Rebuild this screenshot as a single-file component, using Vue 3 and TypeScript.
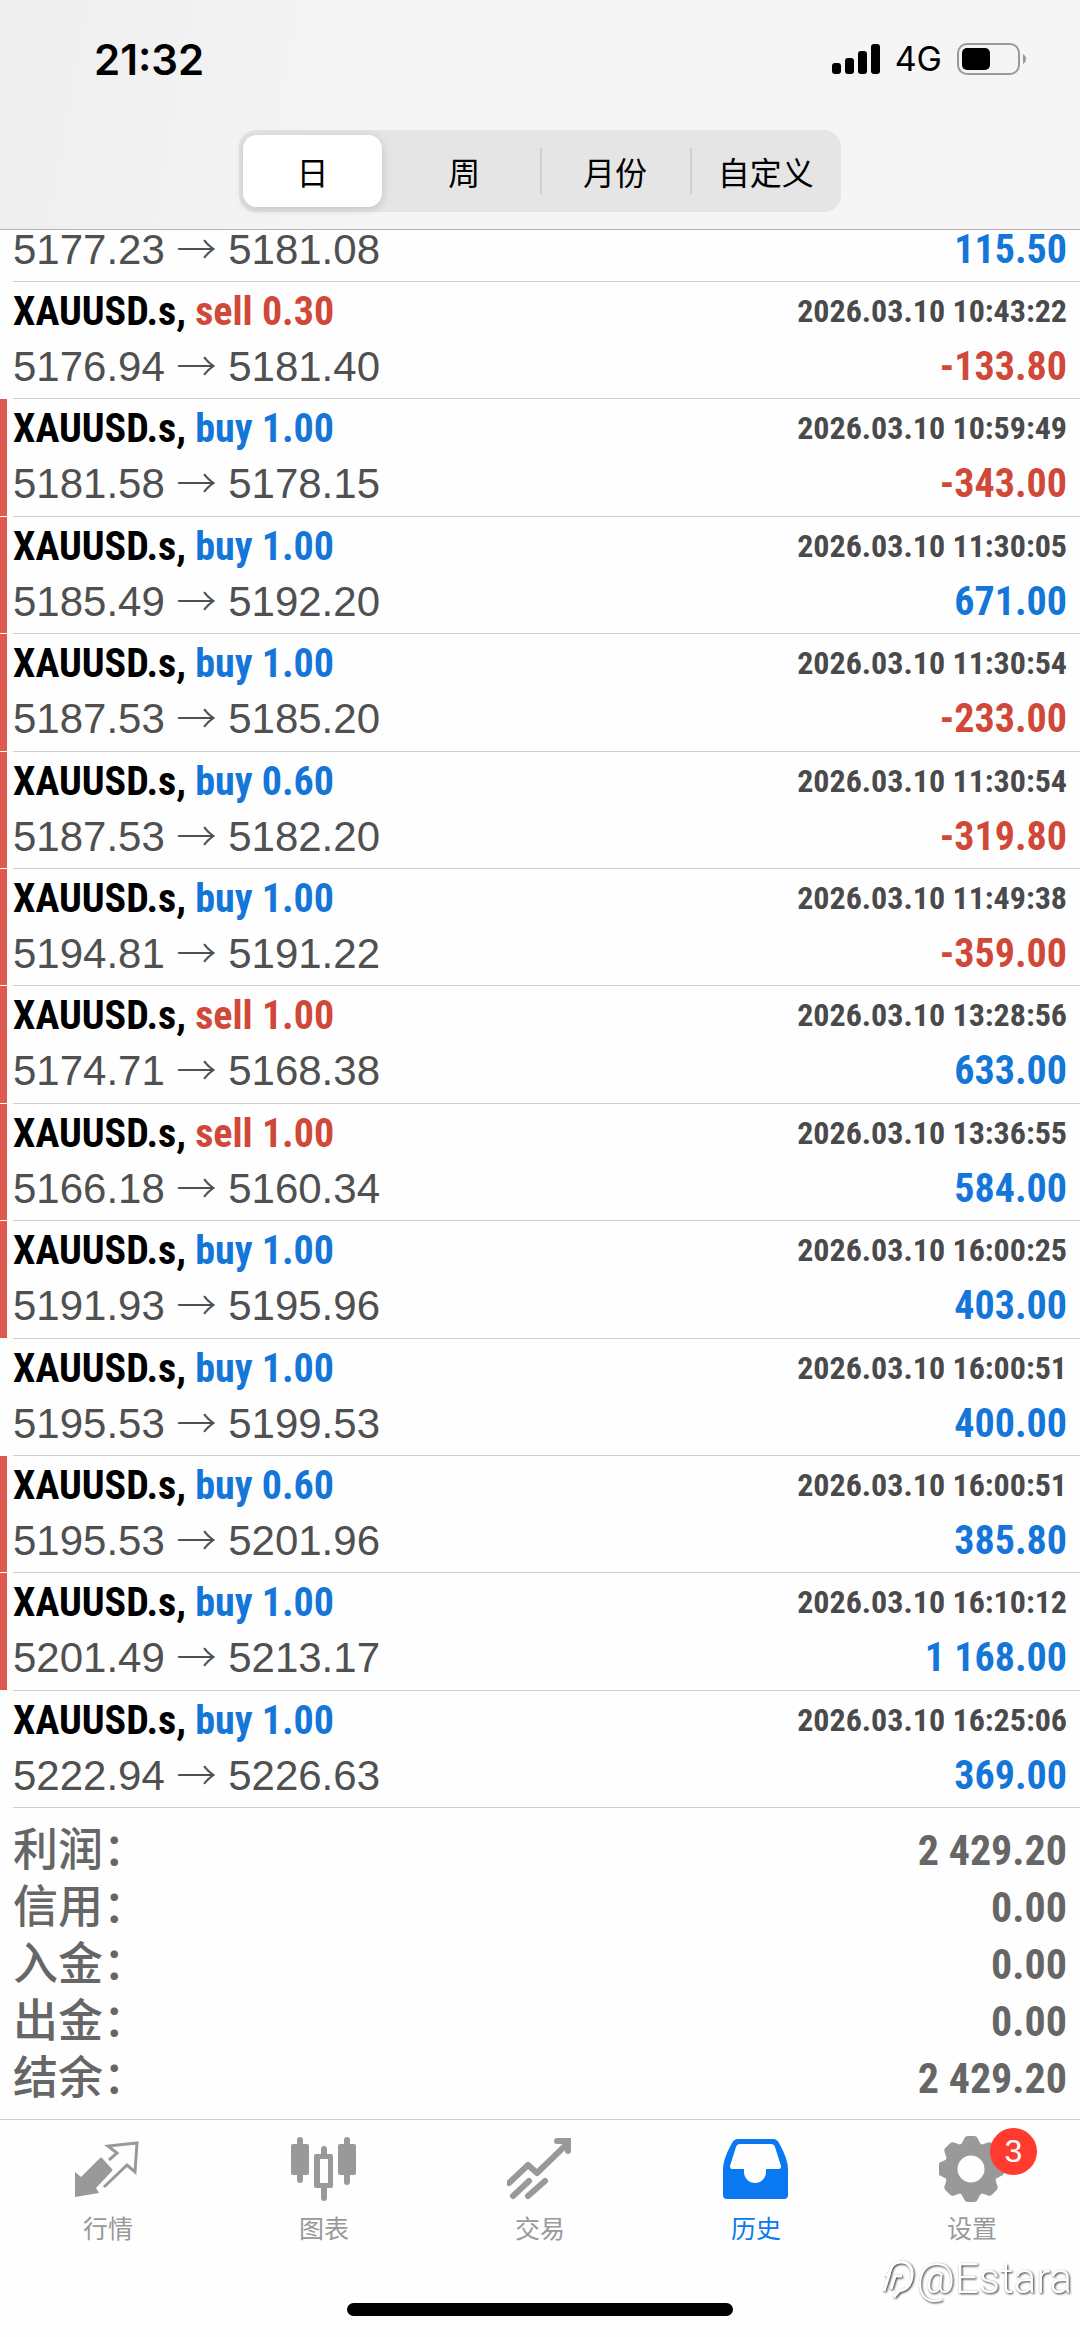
<script setup lang="ts">
import { ref } from 'vue'

type Side = 'buy' | 'sell'

interface Deal {
  side: Side
  volume: string
  open: string
  close: string
  time: string
  profit: string
  marked: boolean
}

const symbol = 'XAUUSD.s'
const periods = ['日', '周', '月份', '自定义']
const period = ref('日')
const tab = ref('history')

const clippedDeal = { open: '5177.23', close: '5181.08', profit: '115.50' }

const deal = (
  side: Side,
  volume: string,
  open: string,
  close: string,
  time: string,
  profit: string,
  marked = true,
): Deal => ({ side, volume, open, close, time: `2026.03.10 ${time}`, profit, marked })

const deals: Deal[] = [
  deal('sell', '0.30', '5176.94', '5181.40', '10:43:22', '-133.80', false),
  deal('buy', '1.00', '5181.58', '5178.15', '10:59:49', '-343.00'),
  deal('buy', '1.00', '5185.49', '5192.20', '11:30:05', '671.00'),
  deal('buy', '1.00', '5187.53', '5185.20', '11:30:54', '-233.00'),
  deal('buy', '0.60', '5187.53', '5182.20', '11:30:54', '-319.80'),
  deal('buy', '1.00', '5194.81', '5191.22', '11:49:38', '-359.00'),
  deal('sell', '1.00', '5174.71', '5168.38', '13:28:56', '633.00'),
  deal('sell', '1.00', '5166.18', '5160.34', '13:36:55', '584.00'),
  deal('buy', '1.00', '5191.93', '5195.96', '16:00:25', '403.00'),
  deal('buy', '1.00', '5195.53', '5199.53', '16:00:51', '400.00', false),
  deal('buy', '0.60', '5195.53', '5201.96', '16:00:51', '385.80'),
  deal('buy', '1.00', '5201.49', '5213.17', '16:10:12', '1 168.00'),
  deal('buy', '1.00', '5222.94', '5226.63', '16:25:06', '369.00', false),
]

const totals = [
  { label: '利润：', value: '2 429.20' },
  { label: '信用：', value: '0.00' },
  { label: '入金：', value: '0.00' },
  { label: '出金：', value: '0.00' },
  { label: '结余：', value: '2 429.20' },
]

const tabs = [
  { id: 'quotes', label: '行情' },
  { id: 'charts', label: '图表' },
  { id: 'trade', label: '交易' },
  { id: 'history', label: '历史' },
  { id: 'settings', label: '设置', badge: 3 },
]

const gearAngles = [0, 45, 90, 135, 180, 225, 270, 315]

const tone = (profit: string) => (profit.startsWith('-') ? 'loss' : 'gain')
</script>

<template>
  <div class="screen">
    <header class="top">
      <div class="status">
        <span class="clock">21:32</span>
        <div class="status-right">
          <svg class="signal" width="48" height="32" viewBox="0 0 48 32" aria-hidden="true">
            <rect x="0" y="20" width="9" height="11" rx="3" />
            <rect x="13" y="15" width="9" height="16" rx="3" />
            <rect x="26" y="8" width="9" height="23" rx="3" />
            <rect x="39" y="1" width="9" height="30" rx="3" />
          </svg>
          <span class="network">4G</span>
          <svg width="70" height="32" viewBox="0 0 70 32" aria-hidden="true">
            <rect x="1" y="1" width="61" height="30" rx="9" fill="none" stroke="#999" stroke-width="2" />
            <rect x="5" y="5" width="28" height="22" rx="5" fill="#000" />
            <path d="M66 11c4 2 4 8 0 10z" fill="#999" />
          </svg>
        </div>
      </div>
      <div class="segments" role="group" aria-label="周期">
        <button
          v-for="p in periods"
          :key="p"
          type="button"
          class="segment"
          :class="{ active: p === period }"
          :aria-pressed="p === period"
          @click="period = p"
        >
          {{ p }}
        </button>
      </div>
    </header>

    <main class="history">
      <ul class="deals">
        <li class="deal clipped">
          <div class="deal-body">
            <div class="line">
              <span class="prices">{{ clippedDeal.open }} <span class="arrow">→</span> {{ clippedDeal.close }}</span>
              <span class="profit gain">{{ clippedDeal.profit }}</span>
            </div>
          </div>
        </li>
        <li v-for="(d, i) in deals" :key="i" class="deal" :class="{ marked: d.marked }">
          <div class="deal-body">
            <div class="line">
              <span class="title">{{ symbol }}, <span :class="d.side">{{ d.side }} {{ d.volume }}</span></span>
              <time class="time">{{ d.time }}</time>
            </div>
            <div class="line">
              <span class="prices">{{ d.open }} <span class="arrow">→</span> {{ d.close }}</span>
              <span class="profit" :class="tone(d.profit)">{{ d.profit }}</span>
            </div>
          </div>
        </li>
      </ul>

      <dl class="totals">
        <div v-for="t in totals" :key="t.label" class="total">
          <dt>{{ t.label }}</dt>
          <dd>{{ t.value }}</dd>
        </div>
      </dl>
    </main>

    <nav class="tabs">
      <button
        v-for="t in tabs"
        :key="t.id"
        type="button"
        class="tab"
        :class="{ current: t.id === tab }"
        @click="tab = t.id"
      >
        <span class="icon">
          <svg width="66" height="66" viewBox="0 0 66 66" aria-hidden="true">
            <g v-if="t.id === 'quotes'">
              <path d="M0 36 6 41 25 22q1-1 2 0L37 33q1 1 0 2L21 52 24 57 0 61z" fill="currentColor" />
              <path
                d="M34 24 42 17 33 10 62 7 60 36 52 29 29 51"
                fill="none"
                stroke="currentColor"
                stroke-width="3"
              />
            </g>
            <g v-else-if="t.id === 'charts'">
              <g stroke="currentColor" stroke-width="6" stroke-linecap="round">
                <path d="M9 4V44M56 4V46M33 13V20M33 50V62" />
              </g>
              <rect x="0" y="8" width="18" height="31" rx="2" fill="currentColor" />
              <rect x="47" y="8" width="18" height="31" rx="2" fill="currentColor" />
              <path
                fill="currentColor"
                fill-rule="evenodd"
                d="M25 18H40q2 0 2 2V50q0 2-2 2H25q-2 0-2-2V20q0-2 2-2zM29 23V47H37V23z"
              />
            </g>
            <g
              v-else-if="t.id === 'trade'"
              fill="none"
              stroke="currentColor"
              stroke-width="6"
              stroke-linecap="round"
              stroke-linejoin="round"
            >
              <path d="M2 47 21 29 30 37 60 8" />
              <path d="M50 5H61V15" stroke-linejoin="miter" />
              <path d="M6 60 22 45M21 60 38 45" />
            </g>
            <path
              v-else-if="t.id === 'history'"
              fill="currentColor"
              fill-rule="evenodd"
              d="M15 3H50Q54 3 56 7Q65 23 65 33V59Q65 63 61 63H4Q0 63 0 59V33Q0 23 9 7Q11 3 15 3zM17 8Q14 8 13 11L7 30Q7 33 9 33H21V36A11 11 0 0 0 43 36V33H56Q58 33 58 30L52 11Q51 8 48 8z"
            />
            <g v-else transform="translate(32 33)" fill="currentColor">
              <circle r="20" fill="none" stroke="currentColor" stroke-width="13" />
              <path
                v-for="a in gearAngles"
                :key="a"
                :transform="`rotate(${a})`"
                d="M-12-23Q-9-25-8-28L-7-30Q-6-33-3-33H3Q6-33 7-30L8-28Q9-25 12-23z"
              />
            </g>
          </svg>
          <span v-if="t.badge" class="badge">{{ t.badge }}</span>
        </span>
        <span class="tab-label">{{ t.label }}</span>
      </button>
      <span class="home-indicator"></span>
      <span class="watermark">
        <svg width="34" height="44" viewBox="0 0 34 44" aria-hidden="true">
          <path
            d="M3 34 8 18H4M8 18C10 8 14 5 20 5C28 5 32 11 31 19C30 28 25 33 18 34L13 40M10 32 14 19H21"
            fill="none"
            stroke="#fff"
            stroke-width="3"
          />
        </svg>
        <span>@Estara</span>
      </span>
    </nav>
  </div>
</template>

<style>
body {
  margin: 0;
  background: #fefefe;
}
</style>

<style scoped>
.screen {
  display: flex;
  flex-direction: column;
  min-height: 100vh;
  background: #fefefe;
  font-family: 'Liberation Sans', 'Noto Sans CJK SC', sans-serif;
}

button {
  margin: 0;
  padding: 0;
  border: 0;
  background: none;
  font: inherit;
  cursor: pointer;
}

.top {
  padding-bottom: 17px;
  border-bottom: 1px solid #b4b4b4;
  background: linear-gradient(100deg, #eeeeee, #f5f5f5 35%, #f5f5f6);
}

.status {
  display: flex;
  align-items: center;
  justify-content: space-between;
  height: 118px;
  padding: 0 53px 0 94px;
  font-family: Inter, sans-serif;
}

.clock {
  font-size: 42px;
  font-weight: 600;
}

.status-right {
  display: flex;
  align-items: center;
}

.network {
  margin: 0 15px;
  font-size: 34px;
  line-height: 32px;
}

.segments {
  display: flex;
  width: 602px;
  max-width: 90%;
  box-sizing: border-box;
  margin: 12px auto 0;
  padding: 5px 0 5px 4px;
  border-radius: 17px;
  background: #e5e5e5;
}

.segment {
  position: relative;
  flex: 1 1 0;
  height: 72px;
  border-radius: 14px;
  color: #000;
  font-family: 'Noto Sans CJK SC', sans-serif;
  font-size: 32px;
  line-height: 72px;
}

.segment.active {
  flex: 0 0 139px;
  margin-right: 7px;
  background: #fff;
  box-shadow: 0 2px 10px rgba(0, 0, 0, 0.16);
}

.segment:nth-child(n + 3)::before {
  content: '';
  position: absolute;
  top: 13px;
  bottom: 13px;
  left: 0;
  width: 2px;
  background: #cfcfcf;
}

.history {
  display: flex;
  flex: 1 0 auto;
  flex-direction: column;
}

.deals {
  display: flex;
  flex: 1 0 auto;
  flex-direction: column;
  margin: 0;
  padding: 0;
  list-style: none;
}

.deal {
  display: flex;
  flex: 1 0 auto;
}

.deal.clipped {
  flex: 0 0 52px;
  height: 52px;
  align-items: flex-end;
}

.deal::before {
  content: '';
  width: 7px;
  margin-bottom: 1px;
}

.deal.marked::before {
  background: #dc5a50;
}

.deal-body {
  flex: 1;
  margin-left: 6px;
  padding: 2px 13px 4px 0;
  border-bottom: 1px solid #cfcfcf;
}

.line {
  display: flex;
  align-items: center;
  justify-content: space-between;
  height: 55px;
  line-height: 55px;
  white-space: nowrap;
}

.title,
.time,
.profit,
.total dd {
  font-family: 'Roboto Condensed', 'Liberation Sans Narrow', Roboto, sans-serif;
  font-weight: 700;
}

.title {
  color: #000;
  font-size: 40px;
}

.time {
  color: #4a4a4a;
  font-size: 32px;
}

.prices {
  color: #505050;
  font-size: 42px;
}

.arrow {
  font-family: 'Noto Sans CJK SC', sans-serif;
  font-size: 40px;
  font-weight: 300;
  line-height: 1;
}

.profit {
  font-size: 40px;
}

.buy,
.gain {
  color: #1476d8;
}

.sell,
.loss {
  color: #d04838;
}

.totals {
  margin: 0;
  padding: 14px 13px 12px;
}

.total {
  display: flex;
  align-items: center;
  justify-content: space-between;
  height: 57px;
  color: #666;
  line-height: 57px;
}

.total dt {
  font-size: 45px;
  font-weight: 500;
}

.total dd {
  margin: 0;
  font-size: 42px;
}

.tabs {
  position: relative;
  display: flex;
  box-sizing: border-box;
  height: 218px;
  border-top: 1px solid #cfcfcf;
}

.tab {
  display: flex;
  flex: 1 1 0;
  flex-direction: column;
  align-items: center;
  padding-top: 16px;
  color: #999;
}

.tab.current {
  color: #0a78f0;
}

.icon {
  position: relative;
  height: 66px;
}

.badge {
  position: absolute;
  top: -8px;
  left: 51px;
  width: 47px;
  height: 47px;
  border-radius: 50%;
  background: #ff3b30;
  color: #fff;
  font-size: 32px;
  line-height: 47px;
  text-align: center;
}

.tab-label {
  margin-top: 8px;
  font-family: 'Noto Sans CJK SC', sans-serif;
  font-size: 25px;
  line-height: 34px;
}

.home-indicator {
  position: absolute;
  bottom: 21px;
  left: 50%;
  width: 386px;
  height: 13px;
  margin-left: -193px;
  border-radius: 7px;
  background: #000;
}

.watermark {
  position: absolute;
  right: 8px;
  bottom: 34px;
  display: flex;
  align-items: center;
  gap: 2px;
  color: #fff;
  font-family: Roboto, sans-serif;
  font-size: 42px;
  font-weight: 300;
  line-height: 48px;
  filter: drop-shadow(1px 1px 1px #333);
}
</style>
